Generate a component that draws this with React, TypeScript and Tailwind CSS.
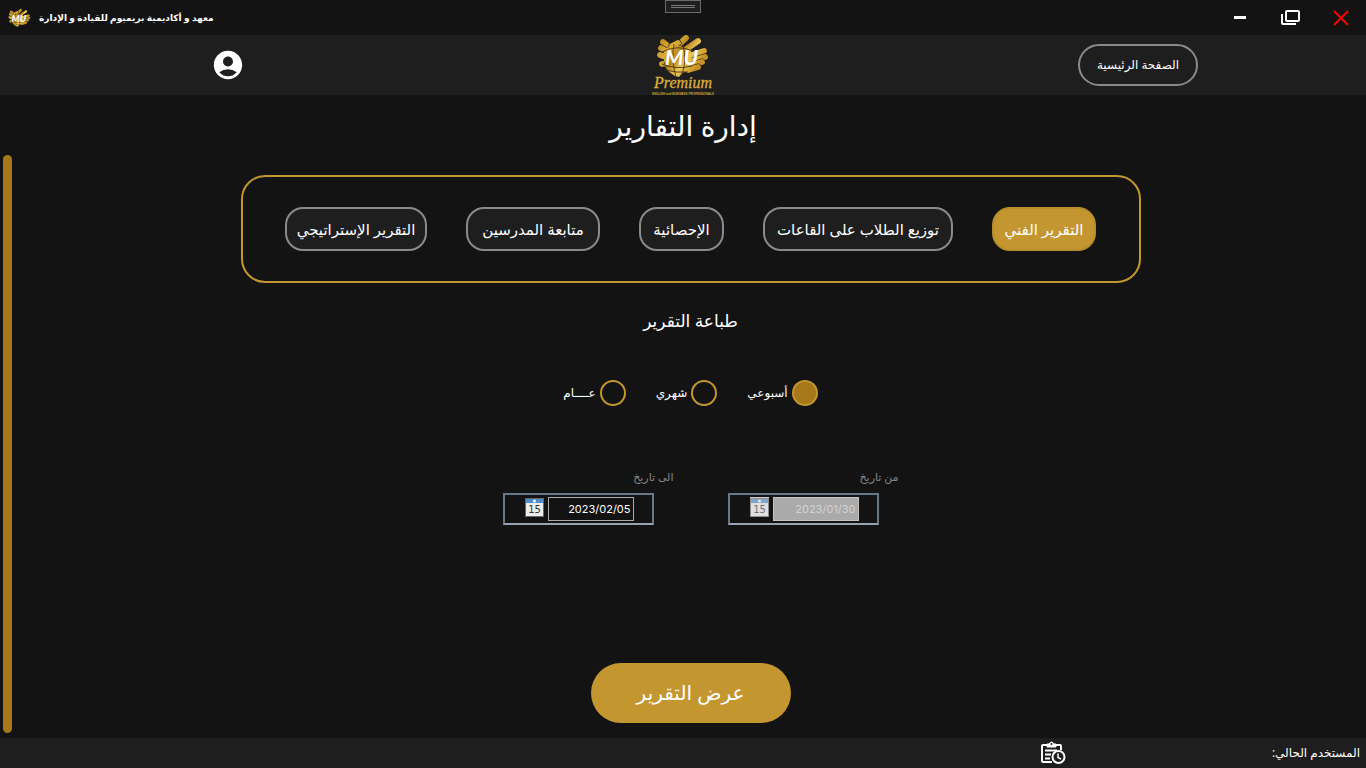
import React, { useState } from "react";
import { MdAccountCircle } from "react-icons/md";

const tabs = [
  { id: "technical", label: "التقرير الفني", width: "w-[104px]" },
  { id: "rooms", label: "توزيع الطلاب على القاعات", width: "w-[190px]" },
  { id: "stats", label: "الإحصائية", width: "w-[85px]" },
  { id: "teachers", label: "متابعة المدرسين", width: "w-[134px]" },
  { id: "strategic", label: "التقرير الإستراتيجي", width: "w-[142px]" },
];

const periods = [
  { id: "weekly", label: "أسبوعي" },
  { id: "monthly", label: "شهري" },
  { id: "general", label: "عــــام" },
];

// gold strokes of the mark, drawn back to front
const fingers = [
  "M11 7 L22 16",
  "M9 13 L22 20",
  "M8 20 L20 24",
  "M10 29 L22 27",
  "M22 14 L34 3",
  "M20 11 L26 8",
  "M30 17 L46 6",
  "M34 22 L52 16",
  "M36 27 L53 22",
  "M37 31 L50 27",
  "M36 35 L46 32",
];

function HandMark() {
  return (
    <g direction="ltr">
      <g fill="none" strokeLinecap="round">
        {fingers.map((d) => (
          <g key={d}>
            <path d={d} stroke="#1e1e1e" strokeWidth="7" />
            <path d={d} stroke="url(#gold)" strokeWidth="5.8" />
          </g>
        ))}
      </g>
      <path
        d="M12 15 L21 10 L31 12 L39 15 L40 28 L36 36 L30 38 L27 42 L23 41 L17 37 L12 30 Z"
        fill="url(#gold)"
      />
      <path
        d="M10 17 Q25 9 41 16 M10 29 Q24 35 40 31 M13 35 Q24 38 36 37 M22 9 Q19 24 24 42 M31 10 Q35 24 30 40 M15 32 L12 27"
        stroke="#4a370e"
        strokeWidth="0.9"
        fill="none"
      />
      <text
        x="13"
        y="30"
        fill="#fff"
        fontSize="21"
        fontStyle="italic"
        fontWeight="bold"
        fontFamily="Lato, sans-serif"
      >
        MU
      </text>
    </g>
  );
}

function GoldGradient() {
  return (
    <defs>
      <linearGradient id="gold" gradientUnits="userSpaceOnUse" x1="4" y1="0" x2="56" y2="40">
        <stop offset="0" stopColor="#b07c12" />
        <stop offset="0.3" stopColor="#dcae38" />
        <stop offset="0.45" stopColor="#b8841a" />
        <stop offset="0.6" stopColor="#edc75a" />
        <stop offset="0.8" stopColor="#c4901f" />
        <stop offset="1" stopColor="#e3b648" />
      </linearGradient>
    </defs>
  );
}

function Logo() {
  return (
    <svg width="62" height="60" viewBox="0 0 62 60" direction="ltr" aria-label="Premium">
      <GoldGradient />
      <HandMark />
      <text
        x="31"
        y="53"
        textAnchor="middle"
        fill="#dcae3c"
        stroke="#dcae3c"
        strokeWidth="0.3"
        fontSize="16"
        fontStyle="italic"
        fontFamily="Liberation Serif, serif"
      >
        Premium
      </text>
      <text
        x="31"
        y="60"
        textAnchor="middle"
        fill="#d0a030"
        fontSize="3"
        fontWeight="bold"
        fontFamily="Liberation Sans, sans-serif"
      >
        ENGLISH and BUSINESS PROFESSIONALS
      </text>
    </svg>
  );
}

function CalendarIcon() {
  return (
    <svg width="19" height="19" viewBox="0 0 19 19" direction="ltr">
      <rect x="0.5" y="0.5" width="18" height="18" fill="#ededed" stroke="#666" />
      <rect x="1" y="1" width="17" height="4" fill="#4f8fcb" />
      <circle cx="9.5" cy="3" r="1.5" fill="#fff" />
      <text
        x="9.5"
        y="15"
        textAnchor="middle"
        fontSize="10"
        fill="#333"
        fontFamily="DejaVu Sans, sans-serif"
      >
        15
      </text>
    </svg>
  );
}

interface DateFieldProps {
  id: string;
  label: string;
  value: string;
  disabled?: boolean;
}

function DateField({ id, label, value, disabled }: DateFieldProps) {
  return (
    <div className="w-[171px]">
      <label htmlFor={id} className="block text-[11px] leading-4 text-[#858585]">
        {label}
      </label>
      <div className="mt-2 ms-5 flex h-8 gap-1 border-2 border-[#667788] border-b-[#97a5b3] ps-[18px] pt-0.5">
        <input
          id={id}
          dir="ltr"
          defaultValue={value}
          disabled={disabled}
          className="h-6 w-[86px] border border-[#ababab] bg-transparent px-0.5 text-right font-['Inter',sans-serif] text-[11px] text-white disabled:border-[#c4c4c4] disabled:bg-[#aaaaaa] disabled:text-[#d3d3d3]"
        />
        <button
          type="button"
          aria-label={label}
          disabled={disabled}
          className="group h-5 bg-transparent disabled:bg-[#cccccc]"
        >
          <span className="block group-disabled:opacity-60">
            <CalendarIcon />
          </span>
        </button>
      </div>
    </div>
  );
}

export default function App() {
  const [tab, setTab] = useState("technical");
  const [period, setPeriod] = useState("weekly");

  return (
    <div
      dir="rtl"
      className="flex min-h-screen flex-col bg-[#131313] font-['Open_Sans','DejaVu_Sans',sans-serif] text-white"
    >
      {/* window title bar */}
      <div dir="ltr" className="relative flex h-[35px] items-center justify-between ps-2 pe-4">
        <div className="flex items-center gap-2">
          <svg width="23" height="20" viewBox="4 0 54 43">
            <HandMark />
          </svg>
          <span dir="rtl" className="text-[9px] font-bold">
            معهد و أكاديمية بريميوم للقيادة و الإدارة
          </span>
        </div>
        <div className="absolute top-0 left-1/2 flex h-[13px] w-9 -translate-x-1/2 flex-col items-center justify-center gap-px border border-[#6b6b6b] bg-[#1e201f]">
          <span className="h-px w-6 bg-[#777777]" />
          <span className="h-px w-6 bg-[#777777]" />
        </div>
        <div className="flex items-center gap-8">
          <button type="button" aria-label="تصغير">
            <svg width="16" height="18" viewBox="0 0 16 18">
              <rect x="2" y="7" width="12" height="3" fill="#fff" />
            </svg>
          </button>
          <button type="button" aria-label="تكبير">
            <svg width="20" height="18" viewBox="0 0 20 18" fill="none" stroke="#fff" strokeWidth="2">
              <rect x="6" y="2" width="13" height="10" rx="1" />
              <path d="M2 5 V14 Q2 15 3 15 H16" />
            </svg>
          </button>
          <button type="button" aria-label="إغلاق">
            <svg width="18" height="18" viewBox="0 0 18 18" stroke="#ff0000" strokeWidth="2">
              <path d="M2 2 L16 16 M16 2 L2 16" />
            </svg>
          </button>
        </div>
      </div>

      <header className="grid h-[60px] grid-cols-3 items-center bg-[#1e1e1e]">
        <div className="ps-[168px]">
          <button
            type="button"
            className="h-[42px] w-[120px] rounded-full border-2 border-[#8a8a8a] text-[12px]"
          >
            الصفحة الرئيسية
          </button>
        </div>
        <div className="flex justify-center">
          <Logo />
        </div>
        <div className="flex justify-end pe-[211px]">
          <button type="button" aria-label="الحساب">
            <MdAccountCircle size={34} />
          </button>
        </div>
      </header>

      <h1 className="flex h-[60px] items-center justify-center text-[28px]">إدارة التقارير</h1>

      <div className="flex grow pb-[5px]">
        <main className="flex grow flex-col items-center">
          <nav className="mt-5 flex h-[108px] w-full max-w-[900px] items-center justify-center gap-[39px] rounded-3xl border-2 border-[#c39630]">
            {tabs.map((t) => (
              <button
                key={t.id}
                type="button"
                onClick={() => setTab(t.id)}
                className={`h-11 rounded-[18px] border-2 text-[15px] whitespace-nowrap ${t.width} ${
                  tab === t.id ? "border-[#b98d2c] bg-[#c39630]" : "border-[#8a8a8a] bg-[#1e1e1e]"
                }`}
              >
                {t.label}
              </button>
            ))}
          </nav>

          <h2 className="mt-6 text-[17px] leading-7">طباعة التقرير</h2>

          <div className="mt-[45px] flex gap-[30px]">
            {periods.map((p) => (
              <label key={p.id} className="flex items-center gap-1 text-[12px]">
                <input
                  type="radio"
                  name="period"
                  checked={period === p.id}
                  onChange={() => setPeriod(p.id)}
                  className="size-[26px] appearance-none rounded-full border-2 border-[#c39630] checked:bg-[#a6781a]"
                />
                {p.label}
              </label>
            ))}
          </div>

          <div className="mt-[63px] flex gap-[54px] pe-5">
            <DateField id="from" label="من تاريخ" value="2023/01/30" disabled />
            <DateField id="to" label="الى تاريخ" value="2023/02/05" />
          </div>

          <button
            type="button"
            className="mt-auto mb-[10px] h-[60px] w-[200px] rounded-full bg-[#c39630] text-[20px]"
          >
            عرض التقرير
          </button>
        </main>
        <div className="w-[15px] px-[3px]">
          <div className="h-full w-[9px] rounded-full bg-[#a6781a]" />
        </div>
      </div>

      <footer className="flex h-[30px] items-center gap-[206px] bg-[#1e1e1e] ps-1.5">
        <span className="text-[12px]">المستخدم الحالي:</span>
        <svg width="26" height="24" viewBox="0 0 26 24" fill="none" stroke="#fff" strokeWidth="2">
          <path d="M8 4 H3 Q2 4 2 5 V20 Q2 21 3 21 H12 M15 4 H20 Q21 4 21 5 V9" />
          <path d="M7 3 H9 Q11.500 -1 14 3 H16 V6 H7 Z" fill="#fff" strokeWidth="1" />
          <circle cx="11.500" cy="3" r="1" fill="#1e1e1e" stroke="none" />
          <path d="M5 9.500 H17 M5 13.500 H11 M5 17.500 H10" />
          <circle cx="18.500" cy="16" r="6" />
          <path d="M18 12.500 V16.500 L21 18" strokeWidth="1.500" />
        </svg>
      </footer>
    </div>
  );
}
